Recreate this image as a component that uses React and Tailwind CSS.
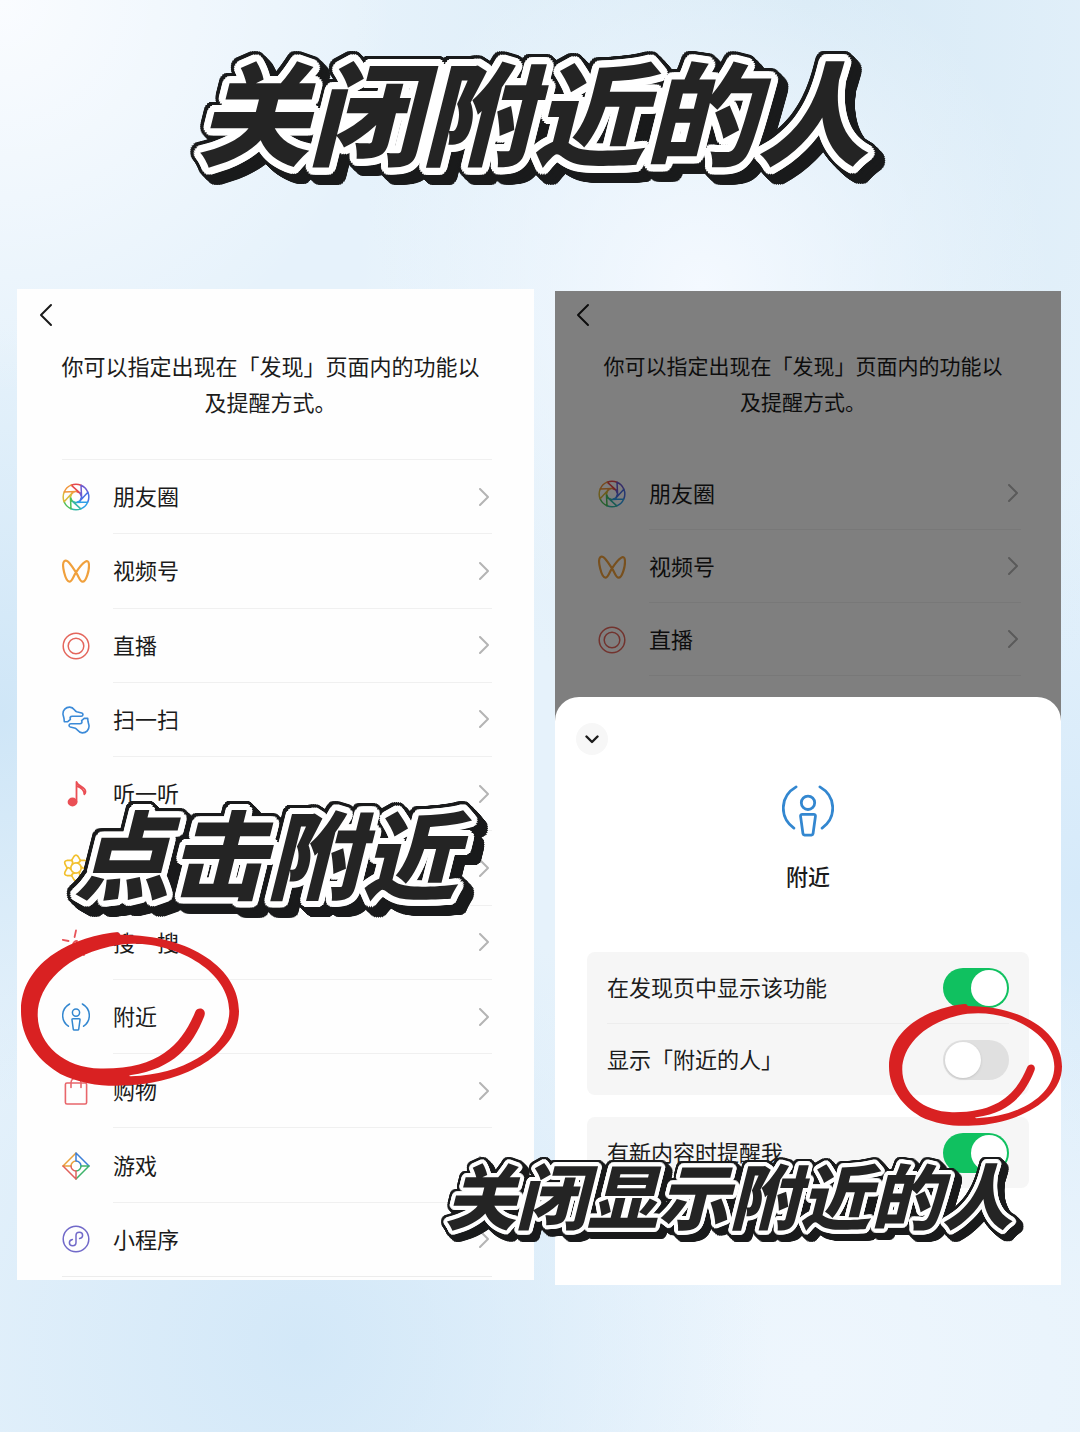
import clsx from 'clsx'

// evenly spaced white shadows that build a rounded outline around lettering
function roundOutline(radius) {
  const steps = 20
  return Array.from({ length: steps }, (_, i) => {
    const a = (i / steps) * Math.PI * 2
    return `${(Math.cos(a) * radius).toFixed(1)}px ${(Math.sin(a) * radius).toFixed(1)}px 0 #fff`
  }).join(', ')
}

function Sticker({ as: Tag = 'p', outline, className, children }) {
  return (
    <Tag
      className={clsx('whitespace-nowrap font-black italic leading-none text-[#242424]', className)}
      style={{ textShadow: `${roundOutline(outline)}, ${roundOutline(outline / 2)}` }}
    >
      {children}
    </Tag>
  )
}

function Icon({ className = 'size-7', children }) {
  return (
    <svg viewBox="0 0 28 28" className={className} fill="none" strokeWidth="1.5" strokeLinecap="round" strokeLinejoin="round" aria-hidden>
      {children}
    </svg>
  )
}

const BLADES = ['#e5484d', '#6d5bd0', '#4a6fe3', '#2f9fe8', '#35b8a6', '#4cc05a', '#d8b93a', '#f0953a']

function polar(r, deg) {
  const a = (deg * Math.PI) / 180
  return `${(14 + r * Math.cos(a)).toFixed(2)} ${(14 + r * Math.sin(a)).toFixed(2)}`
}

function MomentsIcon() {
  return (
    <Icon>
      {BLADES.map((color, i) => {
        const a = i * 45 - 112
        return (
          <path key={color} stroke={color} d={`M${polar(12.8, a)} A12.8 12.8 0 0 1 ${polar(12.8, a + 45)} M${polar(12.8, a)} L${polar(5.6, a + 68)} L${polar(5.6, a + 23)}`} />
        )
      })}
    </Icon>
  )
}

function ChannelsIcon() {
  return (
    <Icon>
      <path stroke="#f0a03c" strokeWidth="2.2" d="M2.2 4.2C5 1.6 8.6 7 14 15.4c3.2 4.9 4 9.3 6.6 9.3 3.6 0 6.9-11.7 6.300-17.7C26.400 1.600 21.400 3.800 14 15.400c-3.200 4.900-4 9.300-6.600 9.300C3.400 24.700-.8 7.200 2.200 4.200Z" />
    </Icon>
  )
}

function LiveIcon() {
  return (
    <Icon>
      <g stroke="#e4665c">
        <circle cx="14" cy="14" r="12.8" />
        <circle cx="14" cy="14" r="7.8" />
      </g>
    </Icon>
  )
}

function ScanIcon() {
  const hand = 'M5.5 15.8 2.3 15.6 2 12.5 1 8.500C.6 4.200 3.800 1 7.800 1.100c4.200.1 4.600 3.700 6.900 4.700l5 1.200c1.900.6 1.500 3.200-.5 3.200H10.300c-2.200 0-2.600 1.200-1.900 3.200Z'
  return (
    <Icon>
      <g stroke="#3b8ad8" strokeWidth="1.6">
        <path d={hand} />
        <path d={hand} transform="rotate(180 14 14)" />
      </g>
    </Icon>
  )
}

function ListenIcon() {
  return (
    <Icon>
      <ellipse cx="10.5" cy="22" rx="4.9" ry="4.4" fill="#ea4f55" />
      <path stroke="#ea4f55" strokeWidth="1.8" d="M14.500 22V2c1 4.500 9 4.500 9 9.800 0 1-.5 1.800-1.200 2.400.2-4.700-3.300-6.500-7.600-8.200" />
    </Icon>
  )
}

function LookIcon() {
  return (
    <Icon>
      <g stroke="#f2c02e" strokeWidth="1.7">
        <circle cx="14" cy="14" r="5.2" />
        {[0, 60, 120, 180, 240, 300].map(deg => (
          <path key={deg} transform={`rotate(${deg} 14 14)`} d="M9.400 6.600 12 2.400Q14 0 16 2.400L18.600 6.600Q18 8.400 15.600 8.800" />
        ))}
      </g>
    </Icon>
  )
}

function SearchIcon() {
  return (
    <Icon>
      <g stroke="#e8545a" strokeWidth="1.8">
        <path d="M12.600 8 14 1.500M6.500 12 .8 10.800M7.500 19 4 23M22 26l-1.500-3" />
        <path d="M19 16a4 4 0 1 1-4-4" />
      </g>
    </Icon>
  )
}

function NearbyIcon({ className }) {
  return (
    <Icon className={className}>
      <g stroke="#3387d0" strokeWidth="1.5">
        <path d="M7.600 1C-1.400 6.200-1.400 17.600 6.400 23.200M20.400 1c9 5.200 9 16.600 1.200 22.200" />
        <circle cx="14" cy="9.6" r="3.6" />
        <path d="M11 15.800h6c.8 0 1.100.4 1 1.100l-1.300 9.400c-.1.500-.3.700-.8.700h-3.800c-.5 0-.7-.2-.8-.7L10 16.900c-.1-.7.2-1.100 1-1.100Z" />
      </g>
    </Icon>
  )
}

function ShoppingIcon() {
  return (
    <Icon>
      <g stroke="#e8666b" strokeWidth="1.6">
        <rect x="3.4" y="6" width="21.2" height="21" rx="1.5" />
        <path d="M9 10.500V5.800a5 5 0 0 1 10 0V10.500" />
      </g>
    </Icon>
  )
}

function GamesIcon() {
  return (
    <Icon>
      <path stroke="#e9a13c" d="M14 1 1 14h8M9 14a5 5 0 0 1 5-5" />
      <path stroke="#3d7fd6" d="M14 9V1l13 13M14 9a5 5 0 0 1 5 5" />
      <path stroke="#3eb36b" d="M19 14h8L14 27M19 14a5 5 0 0 1-5 5" />
      <path stroke="#e0605c" d="M14 19v8L1 14M14 19a5 5 0 0 1-5-5" />
    </Icon>
  )
}

function MiniProgramIcon() {
  return (
    <Icon>
      <g stroke="#7169c9">
        <circle cx="14" cy="14" r="12.8" />
        <path d="M17.600 13.500c2-.4 3-1.700 3-3.300 0-1.800-1.500-3-3.300-3S14 8.600 14 10.400v7.200c0 1.800-1.500 3.200-3.300 3.200s-3.300-1.200-3.300-3c0-1.600 1-2.900 3-3.300" />
      </g>
    </Icon>
  )
}

const FEATURES = [
  { name: '朋友圈', icon: MomentsIcon },
  { name: '视频号', icon: ChannelsIcon },
  { name: '直播', icon: LiveIcon },
  { name: '扫一扫', icon: ScanIcon },
  { name: '听一听', icon: ListenIcon },
  { name: '看一看', icon: LookIcon },
  { name: '搜一搜', icon: SearchIcon },
  { name: '附近', icon: NearbyIcon },
  { name: '购物', icon: ShoppingIcon },
  { name: '游戏', icon: GamesIcon },
  { name: '小程序', icon: MiniProgramIcon },
]

function BackButton() {
  return (
    <button type="button" aria-label="返回" className="block">
      <svg width="14" height="24" viewBox="0 0 14 24" fill="none" stroke="#1b1b1b" strokeWidth="2" strokeLinecap="round" strokeLinejoin="round" aria-hidden>
        <path d="M12 2 2 12l10 10" />
      </svg>
    </button>
  )
}

function FeatureRow({ feature, last }) {
  const FeatureIcon = feature.icon
  return (
    <li className={clsx('flex', last && 'border-b border-[#ececec]')}>
      <a href="#" className="flex flex-1 items-center">
        <FeatureIcon />
        <span className={clsx('ml-[23px] flex flex-1 items-center justify-between self-stretch pr-[3px]', !last && 'border-b border-[#f0f0f0]')}>
          <span className="pb-[2px]">{feature.name}</span>
          <svg width="10" height="18" viewBox="0 0 10 18" fill="none" stroke="#b4b4b4" strokeWidth="2" strokeLinecap="round" strokeLinejoin="round" aria-hidden>
            <path d="m1 1 8 8-8 8" />
          </svg>
        </span>
      </a>
    </li>
  )
}

function MarkerCircle({ className }) {
  return (
    <svg viewBox="32 60 653 465" className={className} aria-hidden>
      <path
        fill="#d92122"
        fillRule="evenodd"
        d="M316 64C175 80 32 160 32 300C32 385 85 450 150 488C215 520 290 527 350 522C510 518 685 430 685 300C685 175 545 72 330 71Q326 62 316 64ZM328 101C480 82 656 175 656 300C656 410 520 490 362 495C355 495 355 492 362 491C490 472 545 405 581 315C590 290 560 285 554 302C515 395 450 475 270 472C160 470 82 400 82 310C82 225 165 125 328 101Z"
      />
    </svg>
  )
}

function Toggle({ id, on }) {
  return (
    <input
      id={id}
      type="checkbox"
      role="switch"
      defaultChecked={on}
      className="h-10 w-[66px] shrink-0 appearance-none rounded-full bg-[#e0e0e0] p-[2px] before:block before:size-9 before:rounded-full before:bg-white before:shadow checked:bg-[#10c160] checked:before:ml-[26px] checked:before:shadow-none"
    />
  )
}

function SettingRow({ id, label, on }) {
  return (
    <div className="flex h-[71px] items-center justify-between">
      <label htmlFor={id} className="pb-[2px]">{label}</label>
      <Toggle id={id} on={on} />
    </div>
  )
}

function DiscoverScreen() {
  return (
    <section className="relative flex min-h-[991px] flex-col bg-[#fefefe] pb-[3px]">
      <div className="px-[22px] pt-[14px]">
        <BackButton />
      </div>
      <p className="mt-5 whitespace-nowrap pr-[10px] text-center leading-9">
        你可以指定出现在「发现」页面内的功能以
        <br />
        及提醒方式。
      </p>
      <ul className="mt-10 ml-[45px] mr-[42px] grid flex-1 auto-rows-fr border-t border-[#f0f0f0]">
        {FEATURES.map((feature, i) => (
          <FeatureRow key={feature.name} feature={feature} last={i === FEATURES.length - 1} />
        ))}
      </ul>

      <MarkerCircle className="absolute left-1 top-[642px] w-[218px]" />
      <Sticker
        outline={6}
        className="absolute left-[57px] top-[514px] text-[96px] [filter:drop-shadow(2px_0_#191a1b)_drop-shadow(-2px_0_#191a1b)_drop-shadow(0_2px_#191a1b)_drop-shadow(0_-2px_#191a1b)_drop-shadow(1px_1px_#191a1b)_drop-shadow(-1px_-1px_#191a1b)_drop-shadow(3px_3px_#191a1b)_drop-shadow(4px_4px_#191a1b)]"
      >
        点击附近
      </Sticker>
    </section>
  )
}

function NearbyScreen() {
  return (
    <section className="relative mt-[2px] flex min-h-[994px] flex-col bg-white">
      <div className="relative h-[430px] overflow-hidden bg-white">
        <div className="px-[21px] pt-3">
          <BackButton />
        </div>
        <p className="mt-5 whitespace-nowrap pr-[10px] text-center text-[21px] leading-9">
          你可以指定出现在「发现」页面内的功能以
          <br />
          及提醒方式。
        </p>
        <ul className="mt-[38px] ml-[43px] mr-10 grid auto-rows-[73px]">
          {FEATURES.slice(0, 3).map(feature => (
            <FeatureRow key={feature.name} feature={feature} />
          ))}
        </ul>
        <div className="absolute inset-0 bg-black/50" />
      </div>

      <div className="relative -mt-6 flex-1 rounded-t-3xl bg-white px-[21px] pt-[26px]">
        <button type="button" aria-label="收起" className="flex size-8 items-center justify-center rounded-full bg-[#f7f7f7]">
          <svg width="14" height="9" viewBox="0 0 14 9" fill="none" stroke="#1b1b1b" strokeWidth="2.4" strokeLinecap="round" strokeLinejoin="round" aria-hidden>
            <path d="m1.500 1.500 5.500 5.500 5.500-5.500" />
          </svg>
        </button>
        <div className="mt-[30px] flex flex-col items-center">
          <NearbyIcon className="size-[52px]" />
          <h2 className="mt-5 font-medium leading-9">附近</h2>
        </div>
        <div className="mx-[11px] mt-[59px] rounded-lg bg-[#f6f6f6] px-5">
          <SettingRow id="show-feature" label="在发现页中显示该功能" on />
          <div className="h-px bg-[#ededed]" />
          <SettingRow id="show-people" label="显示「附近的人」" on={false} />
        </div>
        <div className="mx-[11px] mt-[22px] rounded-lg bg-[#f6f6f6] px-5">
          <SettingRow id="notify-me" label="有新内容时提醒我" on />
        </div>
      </div>

      <MarkerCircle className="absolute -right-px top-[712px] w-[173px]" />
      <Sticker
        outline={4}
        className="absolute -left-[110px] top-[867px] text-[71px] [filter:drop-shadow(2px_0_#191a1b)_drop-shadow(-2px_0_#191a1b)_drop-shadow(0_2px_#191a1b)_drop-shadow(0_-2px_#191a1b)_drop-shadow(2px_2px_#191a1b)_drop-shadow(3px_3px_#191a1b)]"
      >
        关闭显示附近的人
      </Sticker>
    </section>
  )
}

export default function App() {
  return (
    <main className="min-h-screen overflow-hidden bg-[#e6f2fb] bg-[radial-gradient(circle_at_0%_0%,#fafcff_0%,transparent_22%),radial-gradient(circle_at_65%_20%,#f4f9ff_0%,transparent_26%),radial-gradient(ellipse_at_75%_0%,#d8eaf6_0%,transparent_40%),radial-gradient(circle_at_0%_50%,#cfe6f7_0%,transparent_30%),radial-gradient(circle_at_28%_94%,#d3e8f8_0%,transparent_30%),radial-gradient(circle_at_75%_96%,#eef6fd_0%,transparent_30%),radial-gradient(circle_at_100%_62%,#d6eafa_0%,transparent_30%)] pb-[147px] font-['Noto_Sans_CJK_SC',sans-serif] text-[22px] text-[#1b1b1b]">
      <header className="flex h-[289px] justify-center pt-[52px] pr-[14px]">
        <Sticker
          as="h1"
          outline={7}
          className="text-[112px] [filter:drop-shadow(2px_0_#191a1b)_drop-shadow(-2px_0_#191a1b)_drop-shadow(0_2px_#191a1b)_drop-shadow(0_-2px_#191a1b)_drop-shadow(1px_1px_#191a1b)_drop-shadow(-1px_-1px_#191a1b)_drop-shadow(3px_3px_#191a1b)_drop-shadow(4px_4px_#191a1b)]"
        >
          关闭附近的人
        </Sticker>
      </header>
      <div className="grid grid-cols-[517fr_506fr] items-start gap-[21px] pl-[17px] pr-[19px]">
        <DiscoverScreen />
        <NearbyScreen />
      </div>
    </main>
  )
}
